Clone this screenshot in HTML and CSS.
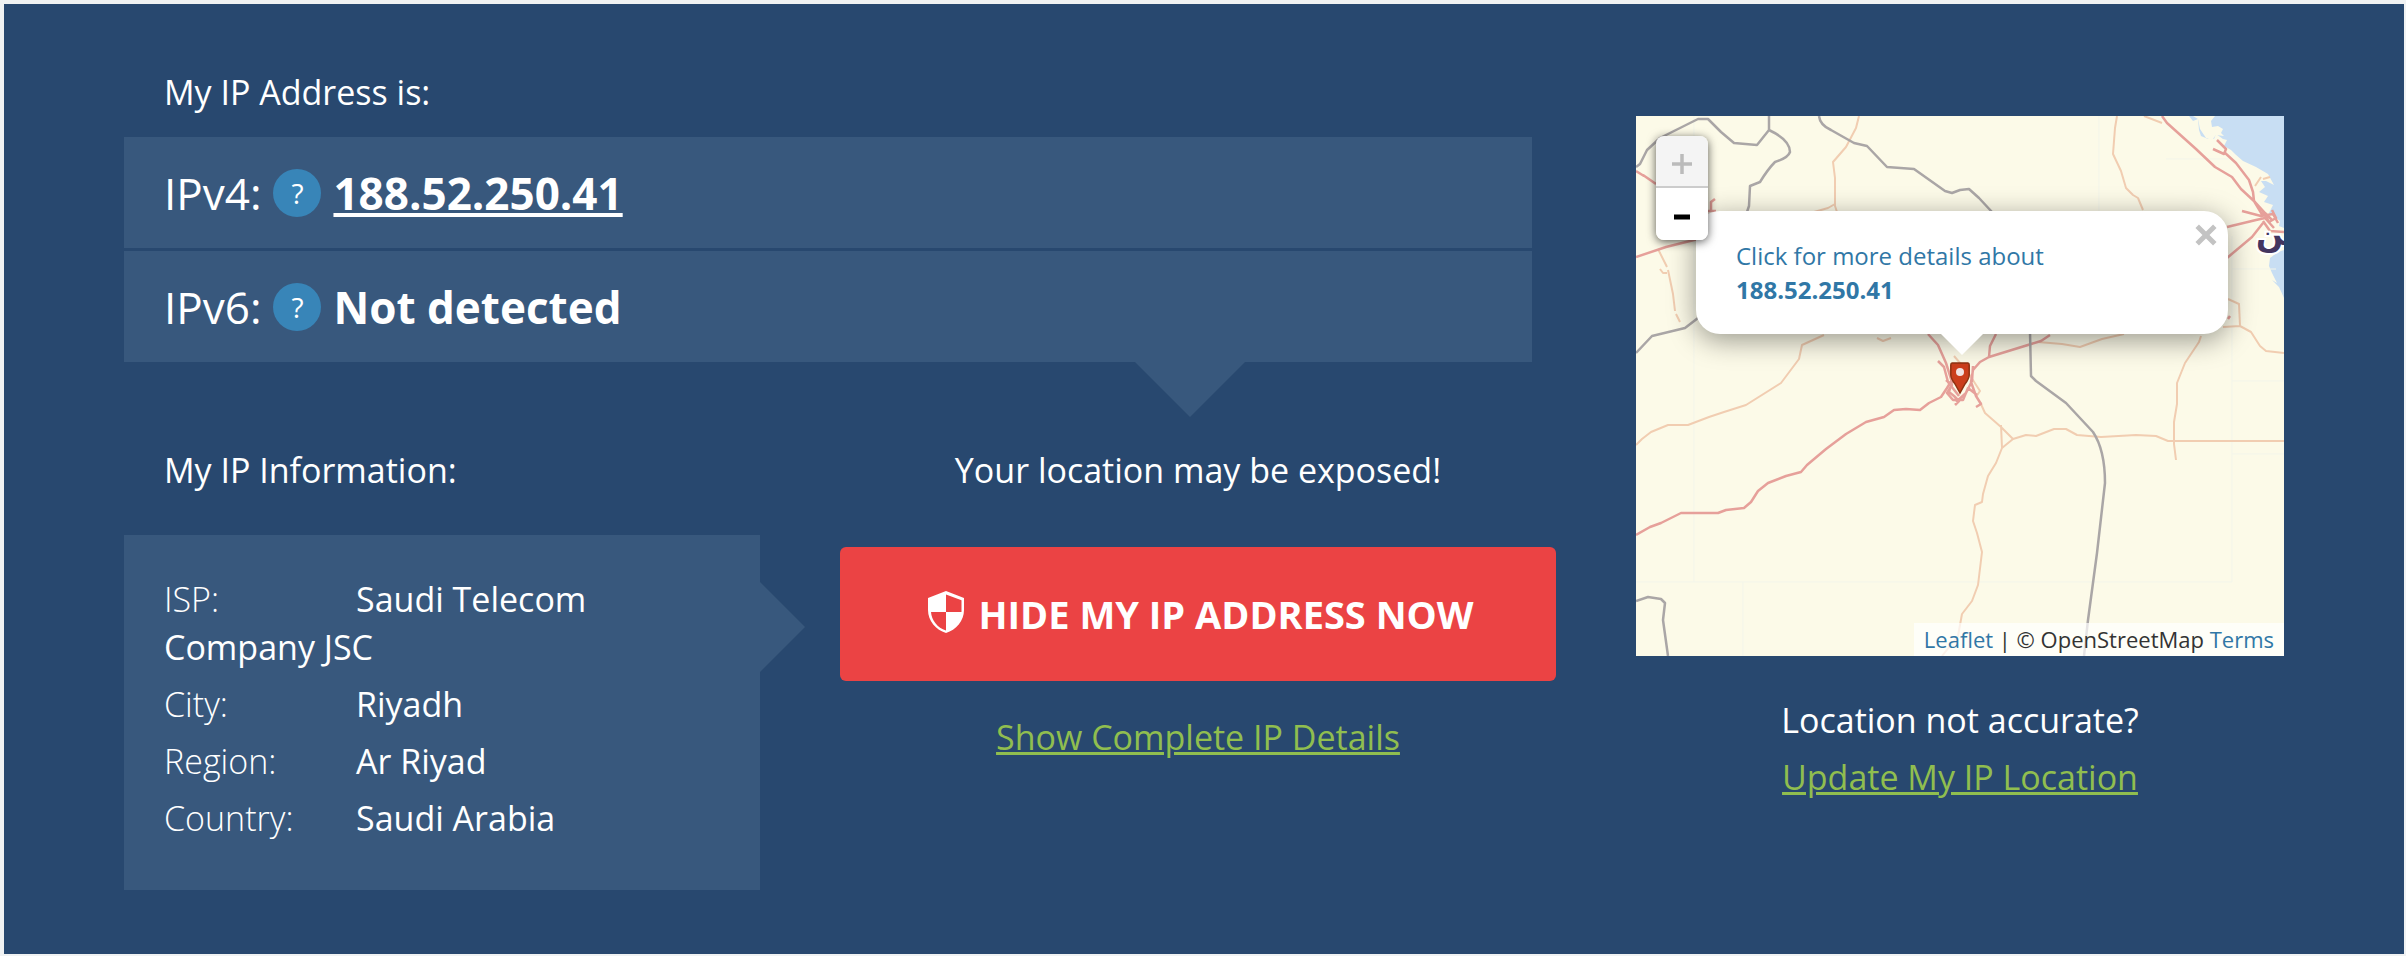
FILE: index.html
```html
<!DOCTYPE html>
<html lang="en">
<head>
<meta charset="utf-8">
<title>What Is My IP Address</title>
<link rel="stylesheet" href="styles.css">
</head>
<body>
<main class="panel">
  <section class="details">
    <h2 class="heading indent">My IP Address is:</h2>
    <div class="ip-list">
      <div class="ip-row">
        <span>IPv4:</span>
        <button class="help" type="button" aria-label="What is IPv4?">?</button>
        <a class="ip-value" href="#">188.52.250.41</a>
      </div>
      <div class="ip-row">
        <span>IPv6:</span>
        <button class="help" type="button" aria-label="What is IPv6?">?</button>
        <strong class="ip-value">Not detected</strong>
      </div>
    </div>
    <div class="lower">
      <section>
        <h2 class="heading indent">My IP Information:</h2>
        <dl class="info">
          <div><dt>ISP:</dt><dd>Saudi Telecom Company JSC</dd></div>
          <div><dt>City:</dt><dd>Riyadh</dd></div>
          <div><dt>Region:</dt><dd>Ar Riyad</dd></div>
          <div><dt>Country:</dt><dd>Saudi Arabia</dd></div>
        </dl>
      </section>
      <section class="action">
        <h2 class="heading">Your location may be exposed!</h2>
        <button class="hide-ip" type="button">
          <svg class="shield" viewBox="0 0 36 42" aria-hidden="true">
            <path fill="#fff" fill-rule="evenodd" d="M18 0 36 7V19C36 30 28 39 18 42 8 39 0 30 0 19V7ZM18 3.500V21H33.500V9.300ZM18 21H3C3.500 29 9.500 37 18 39.500Z"/>
          </svg>
          HIDE MY IP ADDRESS NOW
        </button>
        <a class="green-link" href="#">Show Complete IP Details</a>
      </section>
    </div>
  </section>
  <aside class="location">
    <div class="map">
      <svg class="tiles" viewBox="0 0 648 540" preserveAspectRatio="xMidYMid slice" role="img" aria-label="Map of Riyadh">
        <rect width="648" height="540" fill="#fcfae8"/>
        <path fill="#c8def3" d="M553 0 557 5 562 3 563 14 565 20 572 23 575 21 578 23 580 18 587 23 591 24 588 30 595 34 599 38 607 45 620 51 632 58 638 69 630 65 625 65 629 71 623 76 632 80 628 86 637 89 633 97 644 105 643 110 648 112V0ZM648 182 643 171 636 164 641 167 636 157 633 150 634 142 642 136 648 134Z"/>
        <path fill="#fcfae8" d="M557 0 579 0 575 5 576 11 582 10 587 13 585 17 588 20 580 19 576 24 570 22 564 13 562 3Z"/>
        <g fill="none" stroke="#f3f5ea" stroke-width="1">
          <path d="M58 0V466M463 0V100M596 120V466M0 466H596M107 466V540M530 43H596M596 153H640M596 265H648M596 338H648"/>
        </g>
        <g fill="none" stroke="#f1cdb1" stroke-width="2" stroke-linejoin="round">
          <path d="M223 0 220 12 210 31 197 46 199 62 199 90 201 96M199 88 192 92 178 96"/>
          <path d="M22 133 31 151M24 153 27 157 31 157M32 154 37 178 39 195M40 198 44 206"/>
          <path d="M188 219 166 229 163 243 145 267 110 289 88 296 73 301 52 309 32 309 15 316 6 323 0 329"/>
          <path d="M241 222 247 225 255 222"/>
          <path d="M481 0 479 12 477 38 485 55 490 72 497 79 502 82 507 94M508 0 526 7"/>
          <path d="M592 183 603 188 604 210 587 211M604 210 615 216 624 230 630 235 648 237"/>
          <path d="M402 226 426 228 444 231 466 223 488 218M565 220 563 226 549 247 541 267 541 288 538 306 538 328 540 344"/>
          <path d="M344 286 349 297 357 304 365 311 377 323 366 332 365 309M377 323 390 319 400 320 418 313 430 313 441 319 465 321 500 319 520 320 532 325 648 325M366 332 360 347 352 360 347 378 346 386 339 389 337 405 341 417 346 436 342 469 336 485 326 498 322 520 306 540"/>
          <path d="M318 240 324 247 333 258 344 275 340 281M625 61 619 70M627 63 634 61"/>
        </g>
        <g fill="none" stroke="#e6a09a" stroke-width="2.500" stroke-linejoin="round">
          <path d="M0 419 14 411 25 407 45 397H82L90 394 108 392 115 386 122 375 132 367 150 360 165 356 171 349 190 333 210 318 230 306 248 301 258 294 270 293 284 294 293 287 305 281 311 272 316 264"/>
          <path d="M0 141 30 131 58 124 74 120M0 55 8 60M7 59 20 68M79 83 75 86 75 96M72 95 80 95"/>
          <path d="M292 218 302 229 310 247 316 266 313 276 318 280 323 285 319 289M302 245 308 251 312 266 323 280M360 218 354 230 353 241M414 219 405 225 353 241 344 246 337 254 335 266 340 280 345 288 340 291M337 250 336 265 330 277 320 286M310 264 316 269 311 277 317 284 327 284 332 272 341 279"/>
          <path d="M526 0 531 7 560 33 579 51 596 61 605 73 619 86 629 97 636 104M581 24 590 33 588 38 577 33M588 36 600 47 613 64 617 76 618 85 627 100M606 95 625 100 637 98 642 107M591 111 620 104 629 102 638 112M591 142 616 121 627 107M627 105 634 115 648 116M636 94 640 102 633 106 627 95M592 203 594 200"/>
        </g>
        <g fill="none" stroke="#aaa6a6" stroke-width="2.500" stroke-linejoin="round">
          <path d="M0 51 4 48 11 34 24 22 62 3H72L85 16 98 27 121 29 133 14V0M133 14Q154 24 154 36 152 42 139 46 132 53 124 66L114 70 113 90 111 96"/>
          <path d="M183 0Q184 9 195 14L218 27 231 30 251 51 278 53 309 75 316 77 324 74 333 73 343 82 356 96"/>
          <path d="M0 237 16 220 49 212 62 202M394 216 395 260 400 265 430 287 457 316Q469 334 469 367L461 437 452 504 448 540M0 485 12 481 25 483 29 487 27 504 32 540"/>
        </g>
        <text class="place" x="620" y="129">ين</text>
      </svg>
      <svg class="marker" viewBox="0 0 20 33" aria-hidden="true">
        <path fill="#cb3e1c" stroke="#8f3212" stroke-width="1.500" d="M2 1H18Q19.200 1 19.200 3V13Q19 17 15 22L10 31 5 22Q1 17 .8 13V3Q.8 1 2 1Z"/>
        <circle cx="10" cy="10" r="4" fill="#f1e3e3"/>
      </svg>
      <div class="popup">
        <a href="#">Click for more details about<br><strong>188.52.250.41</strong></a>
        <button class="close" type="button" aria-label="Close popup">
          <svg viewBox="0 0 20 20" aria-hidden="true"><path d="M2 2 18 18M18 2 2 18" stroke="#c3c3c3" stroke-width="4.500"/></svg>
        </button>
      </div>
      <div class="zoom">
        <button type="button" aria-label="Zoom in" disabled>
          <svg viewBox="0 0 20 20" aria-hidden="true"><path d="M0 10H20M10 0V20" stroke="#bbb" stroke-width="3.500"/></svg>
        </button>
        <button type="button" aria-label="Zoom out">
          <svg viewBox="0 0 20 20" aria-hidden="true"><path d="M2 10H18" stroke="#000" stroke-width="5"/></svg>
        </button>
      </div>
      <div class="credit"><a href="#">Leaflet</a> | © OpenStreetMap <a href="#">Terms</a></div>
    </div>
    <p class="question">Location not accurate?</p>
    <a class="green-link" href="#">Update My IP Location</a>
  </aside>
</main>
</body>
</html>
```

FILE: styles.css
```css
* {
  box-sizing: border-box;
}

body {
  margin: 0;
  padding: 4px 2px 2px 4px;
  min-height: 100vh;
  display: flex;
  background: #f0f2f3;
  color: #fff;
  font: 34px/48px "Open Sans", "Noto Sans", sans-serif;
}

button {
  font: inherit;
  color: inherit;
  border: 0;
  padding: 0;
  cursor: pointer;
}

.panel {
  flex: 1;
  display: grid;
  grid-template-columns: minmax(0, 1fr) 30%;
  column-gap: 80px;
  align-items: start;
  padding: 64px 120px;
  background: #28486f;
}

.heading {
  margin: 0;
  font-size: 34px;
  font-weight: 400;
}

.indent {
  padding-left: 40px;
}

.ip-list {
  position: relative;
  display: grid;
  gap: 3px;
  margin: 21px 24px 0 0;
}

.ip-list::after {
  content: "";
  position: absolute;
  top: 100%;
  right: 287px;
  border: 55px solid transparent;
  border-top-color: #38587d;
  border-bottom: 0;
}

.ip-row {
  display: flex;
  align-items: center;
  gap: 12px;
  height: 111px;
  padding: 0 40px;
  background: #38587d;
  font-size: 44px;
}

.help {
  width: 48px;
  height: 48px;
  border-radius: 50%;
  background: #3885b8;
  font-size: 28px;
}

.ip-value {
  color: #fff;
  font-weight: 700;
}

.lower {
  display: grid;
  grid-template-columns: minmax(0, 636fr) minmax(0, 716fr);
  column-gap: 80px;
  margin-top: 84px;
}

.info {
  position: relative;
  display: grid;
  gap: 9px;
  margin: 41px 0 0;
  padding: 40px 40px 48px;
  background: #38587d;
}

.info::after {
  content: "";
  position: absolute;
  left: 100%;
  top: 47px;
  border: 45px solid transparent;
  border-left-color: #38587d;
  border-right: 0;
}

.info dt {
  display: inline-block;
  width: 192px;
  font-weight: 300;
}

.info dd {
  display: inline;
  margin: 0;
}

.action {
  display: flex;
  flex-direction: column;
  align-items: center;
}

.hide-ip {
  display: flex;
  align-items: center;
  justify-content: center;
  gap: 14px;
  width: 100%;
  height: 134px;
  margin: 53px 0 32px;
  padding-left: 6px;
  border-radius: 6px;
  background: #eb4344;
  font-size: 38px;
  font-weight: 700;
}

.shield {
  width: 36px;
  height: 42px;
  margin-bottom: 4px;
}

.green-link {
  color: #90be4f;
}

.location {
  display: flex;
  flex-direction: column;
  align-items: center;
  padding-top: 48px;
}

.map {
  position: relative;
  width: 100%;
  height: 540px;
  overflow: hidden;
  background: #fcfae8;
}

.map a {
  color: #3077a6;
  text-decoration: none;
}

.tiles {
  display: block;
  width: 100%;
  height: 100%;
}

.place {
  fill: #43355f;
  stroke: #fff;
  stroke-width: 4px;
  paint-order: stroke;
  font: 700 32px "DejaVu Sans", sans-serif;
}

.marker {
  position: absolute;
  top: 246px;
  left: calc(50% - 10px);
  width: 20px;
  height: 33px;
}

.popup {
  position: absolute;
  top: 95px;
  left: 60px;
  right: 56px;
  height: 123px;
  padding: 28px 40px;
  border-radius: 24px;
  background: #fff;
  box-shadow: 0 6px 28px rgba(0, 0, 0, .4);
  font-size: 24px;
  line-height: 34px;
}

.popup::after {
  content: "";
  position: absolute;
  top: 100%;
  left: 50%;
  margin-left: -21px;
  border: 21px solid transparent;
  border-top-color: #fff;
  border-bottom: 0;
}

.close {
  position: absolute;
  top: 13px;
  right: 11px;
  width: 22px;
  height: 22px;
  background: none;
}

.close svg {
  display: block;
}

.zoom {
  position: absolute;
  top: 20px;
  left: 20px;
  width: 52px;
  border-radius: 8px;
  overflow: hidden;
  box-shadow: 0 2px 10px rgba(0, 0, 0, .65);
}

.zoom button {
  display: grid;
  place-items: center;
  width: 100%;
  height: 52px;
  padding-top: 6px;
  background: #fff;
}

.zoom button:disabled {
  border-bottom: 2px solid #ccc;
  background: #f4f4f4;
}

.zoom svg {
  width: 20px;
  height: 20px;
}

.credit {
  position: absolute;
  right: 0;
  bottom: 0;
  padding: 0 10px;
  background: rgba(255, 255, 255, .7);
  color: #333;
  font-size: 22px;
  line-height: 33px;
}

.question {
  margin: 40px 0 9px;
}
```
